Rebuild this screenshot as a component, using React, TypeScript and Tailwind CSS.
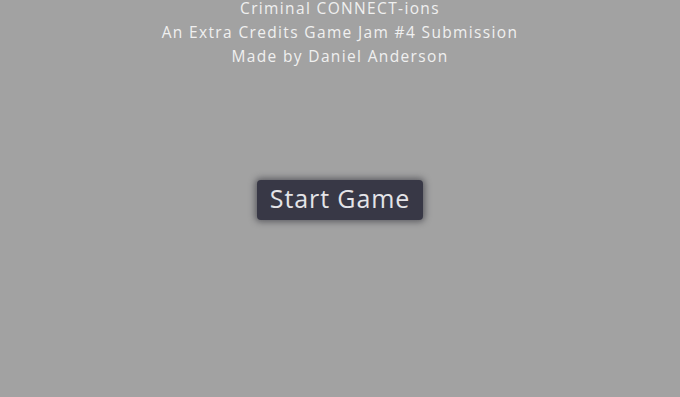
export default function App() {
  return (
    <div
      className="flex h-[397px] w-[680px] flex-col items-center overflow-hidden bg-[#a2a2a2] text-[#f0f0f0]"
      style={{ fontFamily: '"Open Sans", "DejaVu Sans", sans-serif' }}
    >
      <div className="-mt-1 flex flex-col items-center text-[15.5px] leading-6 tracking-[1.35px]">
        <p>Criminal CONNECT-ions</p>
        <p>An Extra Credits Game Jam #4 Submission</p>
        <p>Made by Daniel Anderson</p>
      </div>
      <button
        type="button"
        className="mt-[112px] flex h-[40px] w-[166px] items-center justify-center rounded-[4px] bg-[#383846] pb-[3px] text-[25px] leading-none tracking-[0.9px] text-[#e4e4e8] shadow-[0_0_6px_2px_rgba(40,40,50,0.55)]"
      >
        Start Game
      </button>
    </div>
  );
}
